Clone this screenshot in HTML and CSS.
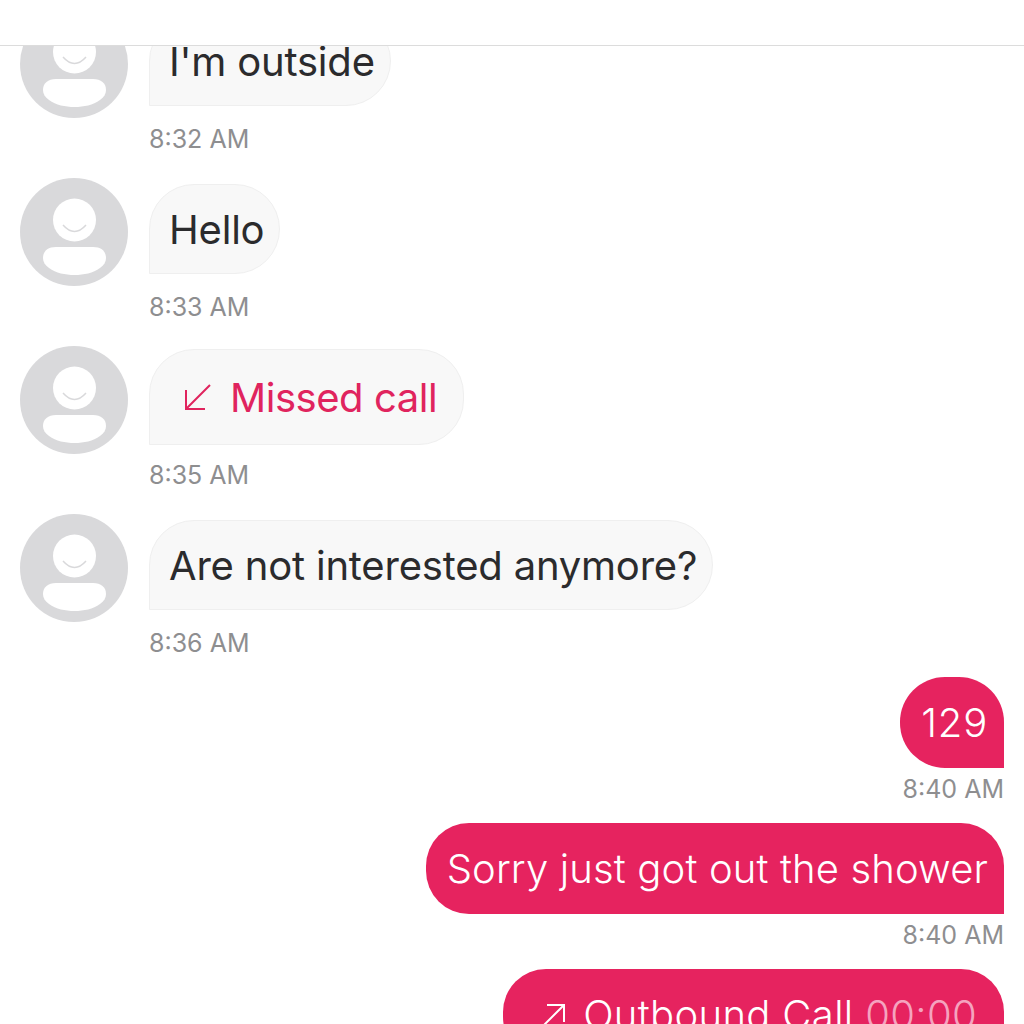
FILE: index.html
```html
<!DOCTYPE html>
<html lang="en">
<head>
    <meta charset="UTF-8">
    <meta name="viewport" content="width=device-width, initial-scale=1.0">
    <title>Messages</title>
    <link rel="stylesheet" href="styles.css">
</head>
<body>

<svg class="icon-defs" width="0" height="0" aria-hidden="true">
    <symbol id="avatar" viewBox="0 0 108 108">
        <circle cx="54" cy="54" r="54" fill="#d9d9db"/>
        <circle cx="54.5" cy="42" r="21.5" fill="#fff"/>
        <path d="M43 47q11.500 13 23 0" fill="none" stroke="#d9d9db" stroke-width="1.500"/>
        <path d="M36 69h37c8 0 13 4 13 11 0 4-2 7-6 10-7 5-16 7-25.500 7s-18.500-2-25.500-7c-4-3-6-6-6-10 0-7 5-11 13-11z" fill="#fff"/>
    </symbol>
</svg>

<header class="topbar"></header>

<main class="thread">
    <div class="thread-inner">

        <div class="msg msg-in">
            <svg class="avatar"><use href="#avatar"/></svg>
            <div class="msg-body">
                <div class="bubble">I'm outside</div>
                <div class="time">8:32 AM</div>
            </div>
        </div>

        <div class="msg msg-in">
            <svg class="avatar"><use href="#avatar"/></svg>
            <div class="msg-body">
                <div class="bubble">Hello</div>
                <div class="time">8:33 AM</div>
            </div>
        </div>

        <div class="msg msg-in">
            <svg class="avatar"><use href="#avatar"/></svg>
            <div class="msg-body">
                <div class="bubble bubble-missed">
                    <svg class="call-icon" viewBox="0 0 28 28"><path d="M26 2 2 26M2 7v19h19" fill="none" stroke="currentColor" stroke-width="2"/></svg>
                    <span>Missed call</span>
                </div>
                <div class="time">8:35 AM</div>
            </div>
        </div>

        <div class="msg msg-in">
            <svg class="avatar"><use href="#avatar"/></svg>
            <div class="msg-body">
                <div class="bubble">Are not interested anymore?</div>
                <div class="time">8:36 AM</div>
            </div>
        </div>

        <div class="msg msg-out">
            <div class="bubble bubble-out bubble-number">129</div>
            <div class="time">8:40 AM</div>
        </div>

        <div class="msg msg-out">
            <div class="bubble bubble-out">Sorry just got out the shower</div>
            <div class="time">8:40 AM</div>
        </div>

        <div class="msg msg-out">
            <div class="bubble bubble-out bubble-call">
                <svg class="call-icon call-icon-out" viewBox="0 0 22 22"><path d="M1 21 21 1M4 1h17v17" fill="none" stroke="currentColor" stroke-width="2"/></svg>
                <span>Outbound Call <span class="duration">00:00</span></span>
            </div>
        </div>

    </div>
</main>

</body>
</html>
```

FILE: styles.css
```css
body {
    font-family: 'Inter', 'Liberation Sans', sans-serif;
    background-color: #fff;
    margin: 0;
    height: 1024px;
    overflow: hidden;
    display: flex;
    flex-direction: column;
}

.icon-defs {
    display: block;
    height: 0;
}

.topbar {
    height: 45px;
    flex: none;
    border-bottom: 1px solid #dcdcdc;
}

.thread {
    flex: 1;
    overflow: hidden;
}

.thread-inner {
    margin-top: -36px;
}

.msg-in {
    display: flex;
    gap: 21px;
    padding-left: 20px;
    margin-bottom: 24px;
}

.msg-in + .msg-out {
    margin-top: -5px;
}

.msg-out {
    display: flex;
    flex-direction: column;
    align-items: flex-end;
    padding-right: 20px;
    margin-bottom: 19px;
}

.avatar {
    width: 108px;
    height: 108px;
    flex: none;
}

.msg-body {
    display: flex;
    flex-direction: column;
    align-items: flex-start;
    margin-top: 6px;
}

.bubble {
    box-sizing: border-box;
    height: 90px;
    padding: 0 15px 0 19px;
    display: flex;
    align-items: center;
    background-color: #f8f8f8;
    border: 1px solid #efefef;
    border-radius: 45px 45px 45px 0;
    color: #2b2b2d;
    font-size: 40px;
    font-weight: 400;
    letter-spacing: -0.2px;
    white-space: nowrap;
}

.bubble-missed {
    height: 96px;
    margin: -3px 0 -3px;
    padding: 0 26px 0 34px;
    color: #e0245e;
    gap: 18px;
    letter-spacing: -0.45px;
}

.bubble-out {
    height: 91px;
    background-color: #e6235f;
    border: none;
    border-radius: 43px 43px 0 43px;
    color: #fff;
    font-weight: 300;
    letter-spacing: 0.15px;
    padding: 0 16px 0 21px;
}

.bubble-number {
    border-radius: 45px 45px 0 45px;
    letter-spacing: 0.8px;
}

.bubble-call {
    padding-left: 40px;
    padding-right: 27px;
    gap: 18px;
    letter-spacing: 0.35px;
}

.call-icon {
    width: 28px;
    height: 28px;
    flex: none;
}

.call-icon-out {
    width: 22px;
    height: 22px;
}

.duration {
    color: #f5a3bf;
}

.time {
    height: 30px;
    margin-top: 18px;
    line-height: 30px;
    color: #8e8e90;
    font-size: 25px;
}

.msg-out .time {
    margin-top: 6px;
}
```
